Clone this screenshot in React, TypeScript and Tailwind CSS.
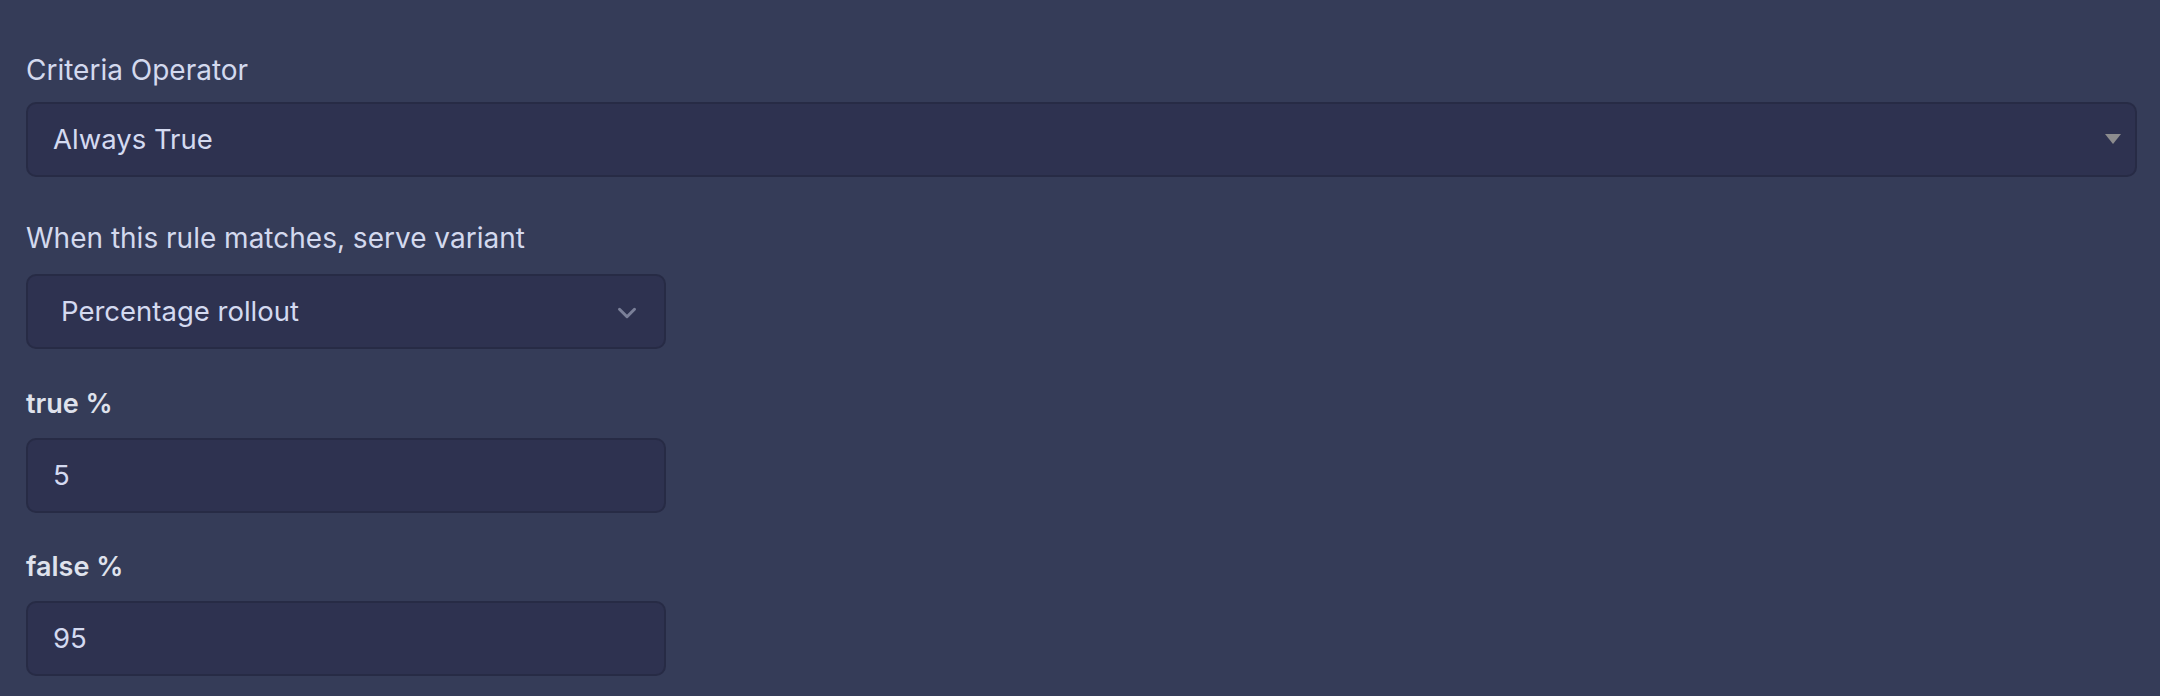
import { ChevronDown } from "lucide-react"

const font = { fontFamily: "Inter, 'Noto Sans', sans-serif" }

function Field({
  label,
  bold,
  children,
  className,
}: {
  label: string
  bold?: boolean
  children: React.ReactNode
  className?: string
}) {
  return (
    <div className={className}>
      <div
        className={`leading-[41px] ${
          bold ? "mb-[14px] text-[27px] font-semibold text-[#dfe2ec]" : "mb-[15px] text-[28px] text-[#d3d9ee]"
        }`}
      >
        {label}
      </div>
      {children}
    </div>
  )
}

export default function App() {
  return (
    <div
      style={font}
      className="h-[696px] w-full overflow-hidden bg-[#353c58] pl-[26px] pr-[23px] pt-[50px] antialiased"
    >
      <div>
        <div className="mb-[11px] text-[28px] leading-[41px] text-[#d3d9ee]">Criteria Operator</div>
        <div className="flex h-[75px] w-full items-center justify-between rounded-[10px] border-2 border-[#272b45] bg-[#2e3250] pl-[25px] pr-[14px]">
          <span className="text-[27.5px] text-[#d4daf0]">Always True</span>
          <svg width="16" height="11" viewBox="0 0 16 11">
            <path d="M0 0 L16 0 L8 10 Z" fill="#8c8c8e" />
          </svg>
        </div>
      </div>

      <Field label="When this rule matches, serve variant" className="mt-[41px]">
        <div className="flex h-[75px] w-[640px] items-center justify-between rounded-[10px] border-2 border-[#272b45] bg-[#2e3250] pl-[33px] pr-[22px]">
          <span className="text-[27.5px] text-[#d4daf0]">Percentage rollout</span>
          <ChevronDown size={30} strokeWidth={2.4} className="mt-[2px] text-[#7b8099]" />
        </div>
      </Field>

      <Field label="true %" bold className="mt-[34px]">
        <div className="flex h-[75px] w-[640px] items-center rounded-[10px] border-2 border-[#272b45] bg-[#2e3250] pl-[25px]">
          <span className="text-[27.5px] text-[#d4daf0]">5</span>
        </div>
      </Field>

      <Field label="false %" bold className="mt-[33px]">
        <div className="flex h-[75px] w-[640px] items-center rounded-[10px] border-2 border-[#272b45] bg-[#2e3250] pl-[25px]">
          <span className="text-[27.5px] text-[#d4daf0]">95</span>
        </div>
      </Field>
    </div>
  )
}
